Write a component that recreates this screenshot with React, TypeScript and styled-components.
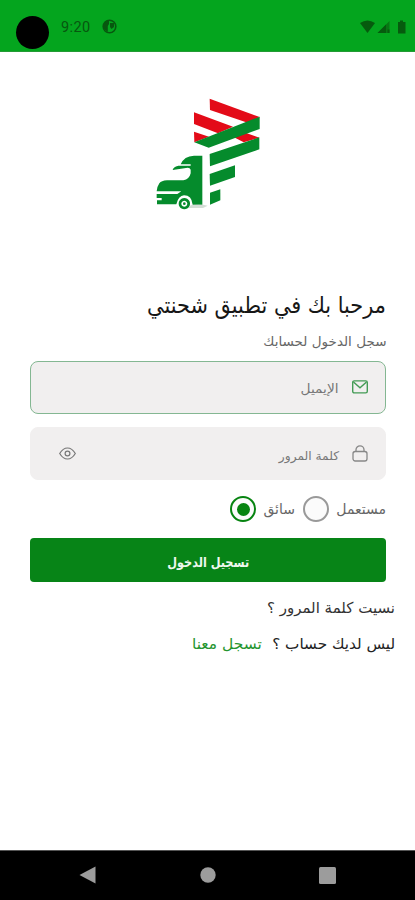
import React from 'react';
import styled, { createGlobalStyle } from 'styled-components';

const GlobalStyle = createGlobalStyle`
  * { box-sizing: border-box; }
  body { margin: 0; background: #fff; }
`;

const Screen = styled.div`
  display: flex;
  flex-direction: column;
  width: 415px;
  height: 900px;
  overflow: hidden;
  background: #fff;
  font-family: "DejaVu Sans", sans-serif;
`;

const StatusBar = styled.header`
  display: flex;
  align-items: center;
  height: 52px;
  padding: 2px 8px 0 16px;
  background: #04a51e;
  color: #07570f;
  border-bottom: 1px solid #249b35;
`;

const Camera = styled.span`
  width: 33px;
  height: 33px;
  margin-top: 11px;
  border-radius: 50%;
  background: #000;
`;

const Clock = styled.time`
  margin-left: 12px;
  width: 41px;
  padding-top: 1px;
  font: 400 14.5px Roboto, sans-serif;
  letter-spacing: 0.4px;
`;

const StatusIcons = styled.div`
  display: flex;
  align-items: center;
  margin-left: auto;
`;

const Content = styled.main`
  display: flex;
  flex-direction: column;
  flex: 1;
  padding: 38px 29px 0 30px;
`;

const LogoBox = styled.div`
  display: flex;
  height: 198px;
  padding-left: 115px;
`;

const Text = styled.span<{ $size: number; $scale?: number; $color?: string; $bold?: boolean }>`
  display: inline-block;
  margin: 0;
  white-space: nowrap;
  font-size: ${(p) => p.$size}px;
  font-weight: ${(p) => (p.$bold ? 700 : 400)};
  line-height: 1;
  color: ${(p) => p.$color ?? '#222'};
  transform: scaleX(${(p) => p.$scale ?? 1});
  transform-origin: right center;
`;

const Line = styled.div<{ $height: number; $outset?: number; $gap?: number }>`
  display: flex;
  align-items: center;
  height: ${(p) => p.$height}px;
  gap: ${(p) => p.$gap ?? 0}px;
  margin-right: ${(p) => -(p.$outset ?? 0)}px;
`;

const Field = styled.div<{ $active?: boolean }>`
  display: flex;
  align-items: center;
  height: 53px;
  margin-bottom: 13px;
  padding: 0 17px 0 28px;
  border: 1px solid ${(p) => (p.$active ? '#84b792' : '#f1efef')};
  border-radius: 8px;
  background: #f1efef;
  svg { flex: none; }
`;

const FieldLabel = styled.div`
  flex: 1;
  display: flex;
  padding: 4px 13px 0 0;
`;

const RadioRow = styled.div`
  display: flex;
  align-items: center;
  height: 32px;
  margin-bottom: 13px;
`;

const RadioLabel = styled.div<{ $width: number; $indent?: number }>`
  display: flex;
  width: ${(p) => p.$width}px;
  padding-right: ${(p) => p.$indent ?? 0}px;
`;

const Radio = styled.span<{ $checked?: boolean }>`
  display: grid;
  place-items: center;
  width: 26px;
  height: 26px;
  flex: none;
  border: 2px solid ${(p) => (p.$checked ? '#078411' : '#999')};
  border-radius: 50%;
  background: #fbfbfb;
  &::after {
    content: '';
    width: 13px;
    height: 13px;
    border-radius: 50%;
    background: ${(p) => (p.$checked ? '#078411' : 'transparent')};
  }
`;

const Submit = styled.button`
  display: flex;
  align-items: center;
  height: 44px;
  margin-bottom: -1px;
  padding: 5px 137px 0 0;
  border: 0;
  border-radius: 4px;
  background: #078417;
  font-family: inherit;
`;

const NavBar = styled.nav`
  display: flex;
  align-items: center;
  justify-content: space-between;
  height: 50px;
  padding: 0 79px 1px;
  background: #000;
  border-top: 1px solid #555;
`;

const Logo = () => (
  <svg width="130" height="130" viewBox="0 0 390 390">
    <g fill="#e30b18">
      <path d="M194 26 344 81 310 99 195 60Z" />
      <path d="M147 67 264 110 219 130 147 102Z" />
      <path d="M147 125 192 140 148 157Z" />
      <path d="M242 128 270 117 343 143 296 157 270 143Z" />
    </g>
    <g fill="#058b2c">
      <path d="M148 157 344 80V117L191 173Z" />
      <path d="M194 192 343 142V178L195 229Z" />
      <path d="M194 252 270 226V261L195 287Z" />
      <path d="M195 308 226 298V331L195 344Z" />
      <path d="M107 223Q117 198 147 197H172V344H143Q140 316 117 316 100 317 94 343H36V331H50V324H35V312H97L109 304H35Q37 288 43 280 49 272 66 271H115Q133 268 137 250V239Q134 231 123 234L83 240Q84 231 100 227H137V223Z" />
      <path fillRule="evenodd" d="M118 324a17 17 0 1 0 .1 0ZM118 332a9 9 0 1 1-.1 0Z" />
      <circle cx="118" cy="341" r="4" />
    </g>
    <path d="M137 346Q162 340 188 347L174 354H130Z" fill="#b8c6bb" opacity=".6" />
  </svg>
);

export default function App() {
  return (
    <>
      <GlobalStyle />
      <Screen>
        <StatusBar>
          <Camera />
          <Clock>9:20</Clock>
          <svg width="15" height="15" viewBox="0 0 15 15">
            <circle cx="7.5" cy="7.5" r="6.3" fill="none" stroke="currentColor" strokeWidth="1.6" />
            <path d="M2 3.5 7 1V5L5.8 7V13L2 10ZM8 4H12V8L9.5 10 8 8Z" fill="currentColor" />
          </svg>
          <StatusIcons>
            <svg width="47" height="16" viewBox="0 0 47 16">
              <path d="M0 4Q7.5-1 15 4L7.5 14Z" fill="#065b0e" />
              <path d="M29.5 2V14H17.5Z" fill="#087814" />
              <path d="M26 5.5V14H17.5ZM27.5 10.5H29.5V14H27.5Z" fill="#065b0e" />
              <path d="M38 3H40V1.5H43V3H45.5V14.5H38Z" fill="#065b0e" />
            </svg>
          </StatusIcons>
        </StatusBar>
        <Content>
          <LogoBox><Logo /></LogoBox>
          <Line $height={34} dir="rtl">
            <Text as="h1" $size={23} $scale={0.905} $color="#161616">مرحبا بك في تطبيق شحنتي</Text>
          </Line>
          <Line $height={39} dir="rtl">
            <Text $size={13} $scale={1.04} $color="#666">سجل الدخول لحسابك</Text>
          </Line>
          <Field $active>
            <FieldLabel dir="rtl"><Text $size={12.5} $scale={1.1} $color="#777">الإيميل</Text></FieldLabel>
            <svg width="16" height="16" viewBox="0 0 16 16" fill="none" stroke="#439b55" strokeWidth="1.4">
              <rect x=".7" y=".9" width="14.6" height="12" rx="1.6" />
              <path d="M1.5 2 8 7.8 14.5 2" />
            </svg>
          </Field>
          <Field>
            <svg width="17" height="13" viewBox="0 0 17 13" fill="none" stroke="#777" strokeWidth="1.2">
              <path d="M.7 6.5Q4 1 8.5 1T16.3 6.5Q13 12 8.5 12T.7 6.5Z" />
              <circle cx="8.5" cy="6.5" r="2.4" />
            </svg>
            <FieldLabel dir="rtl"><Text $size={12} $scale={1.02} $color="#777">كلمة المرور</Text></FieldLabel>
            <svg width="16" height="18" viewBox="0 0 16 18" fill="none" stroke="#888" strokeWidth="1.3">
              <rect x="1" y="6.5" width="14" height="9.5" rx="2.2" />
              <path d="M4 6.5V4.8a4 4 0 0 1 8 0V6.5" />
            </svg>
          </Field>
          <RadioRow dir="rtl">
            <RadioLabel $width={57}><Text $size={14} $color="#666">مستعمل</Text></RadioLabel>
            <Radio />
            <RadioLabel $width={47} $indent={8}><Text $size={14} $color="#666">سائق</Text></RadioLabel>
            <Radio $checked />
          </RadioRow>
          <Submit dir="rtl"><Text $size={13.5} $scale={0.835} $bold $color="#eef8ee">تسجيل الدخول</Text></Submit>
          <Line $height={55} $outset={9} dir="rtl"><Text $size={15} $color="#333">نسيت كلمة المرور ؟</Text></Line>
          <Line $height={16} $outset={9} $gap={12} dir="rtl">
            <Text $size={15} $scale={1.015} $color="#222">ليس لديك حساب ؟</Text>
            <Text $size={15} $scale={1.03} $color="#25952f">تسجل معنا</Text>
          </Line>
        </Content>
        <NavBar>
          <svg width="17" height="18" viewBox="0 0 17 18"><path d="M.5 9 16.5.5V17.5Z" fill="#9c9c9c" /></svg>
          <svg width="16" height="16" viewBox="0 0 16 16"><circle cx="8" cy="8" r="7.7" fill="#9c9c9c" /></svg>
          <svg width="17" height="17" viewBox="0 0 17 17"><rect width="17" height="17" rx="1.5" fill="#9c9c9c" /></svg>
        </NavBar>
      </Screen>
    </>
  );
}
